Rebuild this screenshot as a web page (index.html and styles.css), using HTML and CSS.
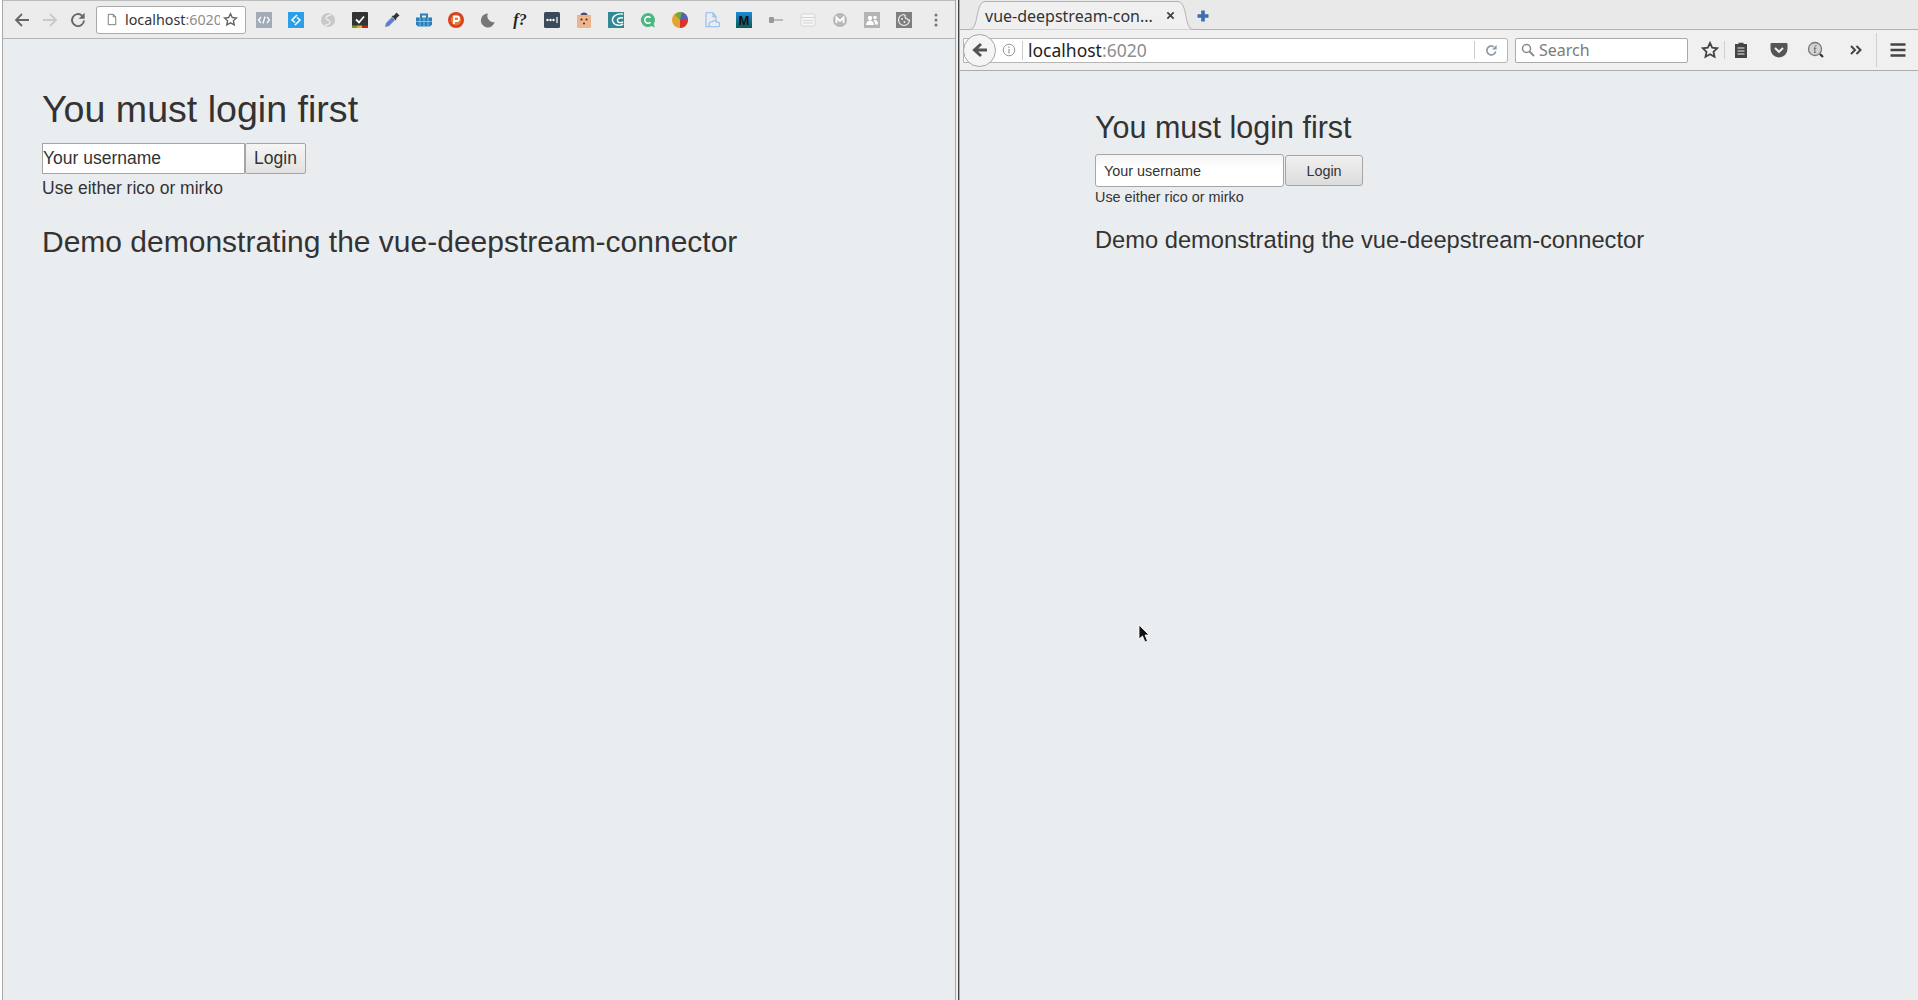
FILE: index.html
```html
<!DOCTYPE html>
<html lang="en">
<head>
<meta charset="utf-8">
<title>vue-deepstream-connector demo</title>
<link rel="stylesheet" href="styles.css">
</head>
<body>
<div class="desktop">
  <section class="chrome">
    <header class="c-bar">
      <div class="c-nav">
        <svg class="i18" viewBox="0 0 18 18"><path d="M16 9H3M9 3 3 9l6 6" fill="none" stroke="#666" stroke-width="1.8"/></svg>
        <svg class="i18" viewBox="0 0 18 18"><path d="M2 9h13M9 3l6 6-6 6" fill="none" stroke="#c9c9c9" stroke-width="1.8"/></svg>
        <svg class="i18" viewBox="0 0 18 18"><path d="M15 9.500A6 6 0 1 1 13 4.600" fill="none" stroke="#666" stroke-width="1.9"/><path d="M15.600 1.800v6h-6z" fill="#666"/></svg>
      </div>
      <div class="c-url">
        <svg class="c-page" viewBox="0 0 12 14"><path d="M1.500.8h6l3 3v9.400h-9zM7.500.8v3h3" fill="#fff" stroke="#666" stroke-width="1"/></svg>
        <span class="c-host">localhost<span class="dim">:6020</span></span>
        <svg class="c-star" viewBox="0 0 16 16"><path d="m8 1.800 1.900 4.100 4.500.5-3.300 3 .9 4.400L8 11.600l-4 2.200.9-4.400-3.300-3 4.500-.5z" fill="none" stroke="#666" stroke-width="1.500"/></svg>
      </div>
      <div class="c-exts">
        <svg class="ext" viewBox="0 0 16 16"><rect width="16" height="16" fill="#a3abb6"/><path d="M5 5 2.500 8 5 11M11 5l2.500 3L11 11M9 4.500 7 11.500" fill="none" stroke="#fff" stroke-width="1.200"/></svg>
        <svg class="ext" viewBox="0 0 16 16"><rect width="16" height="16" fill="#2b9fe8"/><path d="M9 3 4 8l3 2.500M7 13l5-5-3-2.500" fill="none" stroke="#fff" stroke-width="1.500"/></svg>
        <svg class="ext" viewBox="0 0 16 16"><circle cx="8" cy="8" r="7" fill="#c8c8c8"/><path d="M11.500 2.500C5 4 5 7 8 8s3 4.500-3.500 5.500" fill="none" stroke="#eee" stroke-width="1.300"/></svg>
        <svg class="ext" viewBox="0 0 16 16"><rect width="16" height="16" rx="1" fill="#333"/><path d="m4 7.500 3 3 5-6" fill="none" stroke="#fff" stroke-width="1.800"/><rect y="13.500" width="5" height="2.500" fill="#7a9a1c"/><rect x="5" y="13.500" width="5" height="2.500" fill="#d8b81e"/><rect x="10" y="13.500" width="6" height="2.500" fill="#b8261e"/></svg>
        <svg class="ext" viewBox="0 0 16 16"><path d="m1 15 1-4 6-6 3 3-6 6z" fill="#5c80cc"/><path d="m7.500 4 2.500-.5L12.500.5 15.500 3.500 12.500 6 12 8.500z" fill="#333"/></svg>
        <svg class="ext" viewBox="0 0 16 16"><path d="M0 5.500h16v7l-2 2H2l-2-2z" fill="#2a7fb8"/><path d="M5 6V2.500h6V6" fill="none" stroke="#2a7fb8" stroke-width="2"/><path d="M0 9.500h16M8 5.500v9M4 5.500v9M12 5.500v9" stroke="#bfe0f0" stroke-width=".6"/></svg>
        <svg class="ext" viewBox="0 0 16 16"><circle cx="8" cy="8" r="8" fill="#d8401f"/><circle cx="8" cy="8" r="5.300" fill="#f3a33a" opacity=".6"/><path d="M6 12V4.500h2.800a2.200 2.200 0 0 1 0 4.500H6" fill="none" stroke="#fff" stroke-width="1.800"/></svg>
        <svg class="ext" viewBox="0 0 16 16"><path d="M8 1.500A7 7 0 1 0 14.700 10 6 6 0 0 1 8 1.500z" fill="#777"/></svg>
        <span class="ext ext-f">f?</span>
        <svg class="ext" viewBox="0 0 16 16"><rect width="16" height="16" rx="1.500" fill="#3b4a5a"/><circle cx="3.500" cy="8" r="1.200" fill="#fff"/><circle cx="6.500" cy="8" r="1.200" fill="#fff"/><circle cx="9.500" cy="8" r="1.200" fill="#fff"/><path d="M13 5v6" stroke="#fff" stroke-width="1.200"/></svg>
        <svg class="ext" viewBox="0 0 16 16"><rect x="1" y="3" width="14" height="13" fill="#eeb48e"/><path d="M4.500 3a3.500 2.500 0 0 1 7 0z" fill="#5a4a6a"/><circle cx="5.500" cy="7.500" r="1" fill="#333"/><circle cx="10.500" cy="7.500" r="1" fill="#333"/><path d="M7 11.500h2" stroke="#333" stroke-width="1.500"/></svg>
        <svg class="ext" viewBox="0 0 16 16"><rect width="16" height="16" fill="#2f8a95"/><path d="M15 2C7 1 3 6 5 10s8 4 10 2M15 6c-4-1-6 1-5.500 3s3.500 2 5.500 1" fill="none" stroke="#fff" stroke-width="1.400"/></svg>
        <svg class="ext" viewBox="0 0 16 16"><path d="M8 1a7 7 0 1 0 3.500 13l3.500 1.500-1.300-3.500A7 7 0 0 0 8 1z" fill="#4cb780"/><path d="M10.500 5.800a3.300 3.300 0 1 0 0 4.400" fill="none" stroke="#fff" stroke-width="1.500"/></svg>
        <svg class="ext" viewBox="0 0 16 16"><circle cx="8" cy="8" r="8" fill="#e4a52c"/><path d="M8 0a8 8 0 0 1 8 8H8z" fill="#5a5fb0"/><path d="M8 8h8a8 8 0 0 1-8 8z" fill="#d8332e"/><path d="M3 3a7 7 0 0 1 7-3L8 8z" fill="#6aac44"/></svg>
        <svg class="ext" viewBox="0 0 16 16"><path d="M2 .8h7l3 4V9M6 14.800H2V.800M9 .8v4h3" fill="none" stroke="#8cbcf0" stroke-width="1.100"/><path d="M7 14.800a2.500 2.500 0 0 1 1-5 3 3 0 0 1 5 .5 2.300 2.300 0 0 1 1 4.500z" fill="none" stroke="#8cbcf0" stroke-width="1.100"/></svg>
        <svg class="ext" viewBox="0 0 16 16"><defs><linearGradient id="mg" x1="0" y1="0" x2="0" y2="1"><stop offset="0" stop-color="#1d8ad8"/><stop offset="1" stop-color="#0a5d50"/></linearGradient></defs><rect width="16" height="16" fill="url(#mg)"/><text x="8" y="13" class="ext-m">M</text></svg>
        <svg class="ext" viewBox="0 0 16 16"><rect x="1" y="5" width="5" height="6" rx="1" fill="#999"/><path d="M6 8h9" stroke="#aaa" stroke-width="1.500"/></svg>
        <svg class="ext" viewBox="0 0 16 16"><rect x="1" y="2" width="14" height="12" rx="1" fill="#f6f6f6" stroke="#d4d4d4"/><path d="M1 5.500h14M3 8.500h10M3 11h10" stroke="#d4d4d4"/></svg>
        <svg class="ext" viewBox="0 0 16 16"><circle cx="8" cy="8" r="7" fill="#b8b8b8"/><path d="M4.500 11V5.500L8 9l3.500-3.500V11" fill="none" stroke="#fff" stroke-width="1.800"/></svg>
        <svg class="ext" viewBox="0 0 16 16"><rect width="16" height="16" fill="#b4b4b4"/><circle cx="6" cy="6" r="2.200" fill="#fff"/><path d="M2 13c0-3 2-4.500 4-4.500s4 1.500 4 4.500z" fill="#fff"/><circle cx="11" cy="5.500" r="1.800" fill="#fff"/><path d="M11 8c2 0 3 1.500 3 4.500h-3c0-2-.5-3-1.500-4z" fill="#fff"/></svg>
        <svg class="ext" viewBox="0 0 16 16"><rect width="16" height="16" fill="#7f7f7f"/><path d="M8 2.500a5.500 5.500 0 1 0 5.500 5.500c-1.500.5-2.500-.5-2.500-1.500-1.500 0-2.500-1.500-1.800-3z" fill="none" stroke="#eee" stroke-width="1.200"/><circle cx="6" cy="7" r=".9" fill="#eee"/><circle cx="8.500" cy="10" r=".9" fill="#eee"/></svg>
        <svg class="ext" viewBox="0 0 16 16"><circle cx="8" cy="3" r="1.500" fill="#777"/><circle cx="8" cy="8" r="1.500" fill="#777"/><circle cx="8" cy="13" r="1.500" fill="#777"/></svg>
      </div>
    </header>
    <main class="c-page-body">
      <h1 class="c-title">You must login first</h1>
      <form class="c-form">
        <input class="c-input" type="text" placeholder="Your username">
        <button class="c-btn" type="button">Login</button>
      </form>
      <p class="c-hint">Use either rico or mirko</p>
      <h2 class="c-sub">Demo demonstrating the vue-deepstream-connector</h2>
    </main>
  </section>

  <div class="divider"></div>

  <section class="firefox">
    <header class="f-tabs">
      <div class="f-tab">
        <svg class="f-tab-shape" viewBox="0 0 223 30"><path d="M0 29.500C9 29 5 2.500 15 1.500H208C218 2.500 214 29 223 29.500" fill="#f0f0f0" stroke="#b2b2b2"/></svg>
        <span class="f-tab-title">vue-deepstream-con...</span>
        <svg class="f-close" viewBox="0 0 10 10"><path d="m1.500 1.500 7 7M8.500 1.500l-7 7" stroke="#444" stroke-width="2"/></svg>
      </div>
      <svg class="f-new" viewBox="0 0 14 14"><path d="M7 1.500v11M1.500 7h11" stroke="#3a6eb0" stroke-width="3.600"/></svg>
    </header>
    <div class="f-bar">
      <div class="f-url">
        <span class="f-back"><svg viewBox="0 0 18 18"><path d="M16 9H5M10 3 3.500 9l6.500 6" fill="none" stroke="#555" stroke-width="3"/></svg></span>
        <svg class="f-info" viewBox="0 0 14 14"><circle cx="7" cy="7" r="5.800" fill="none" stroke="#999"/><path d="M7 6v4.500M7 3.500v1.400" stroke="#999" stroke-width="1.200"/></svg>
        <span class="f-host">localhost<span class="dim">:6020</span></span>
        <span class="f-reload"><svg viewBox="0 0 14 14"><path d="M11.500 8A4.800 4.800 0 1 1 9.500 3" fill="none" stroke="#8a98a8" stroke-width="1.800"/><path d="M12.500 1v5h-5z" fill="#8a98a8"/></svg></span>
      </div>
      <div class="f-search">
        <svg viewBox="0 0 14 14"><circle cx="5.500" cy="5.500" r="4" fill="none" stroke="#888" stroke-width="1.500"/><path d="m8.500 8.500 4.500 4.500" stroke="#888" stroke-width="1.800"/></svg>
        <span>Search</span>
      </div>
      <div class="f-tools">
        <svg class="f-ic f-star" viewBox="0 0 18 18"><path d="m9 2 2.200 4.700 5 .6-3.700 3.500 1 5L9 13.300l-4.500 2.500 1-5-3.700-3.500 5-.6z" fill="none" stroke="#444" stroke-width="1.800"/></svg>
        <span class="f-sep"></span>
        <svg class="f-ic f-clip" viewBox="0 0 18 18"><path d="M6.500 3V1.800h5V3H15v14H3V3z" fill="#444"/><path d="M5.500 7h7M5.500 10h7M5.500 13h7" stroke="#eee" stroke-width="1.200"/></svg>
        <svg class="f-ic f-pocket" viewBox="0 0 18 18"><path d="M1.500 2h15a1 1 0 0 1 1 1v5a8.500 8.500 0 0 1-17 0V3a1 1 0 0 1 1-1z" fill="#555"/><path d="m5 7 4 3.800L13 7" fill="none" stroke="#f0f0f0" stroke-width="2"/></svg>
        <svg class="f-ic f-look" viewBox="0 0 18 18"><circle cx="8" cy="8" r="6.500" fill="#d4d4d4" stroke="#777" stroke-width="1.300"/><text x="8" y="12" class="f-look-f">f</text><path d="m13 13 3 3" stroke="#333" stroke-width="2.200"/></svg>
        <svg class="f-ic f-more" viewBox="0 0 14 14"><path d="m2 3 4 4-4 4M7.500 3l4 4-4 4" fill="none" stroke="#444" stroke-width="2"/></svg>
        <span class="f-sep f-sep-tall"></span>
        <svg class="f-ic f-menu" viewBox="0 0 18 18"><path d="M1.500 3.500h15M1.500 9h15M1.500 14.500h15" stroke="#444" stroke-width="2.600"/></svg>
      </div>
    </div>
    <main class="f-page-body">
      <h1 class="f-title">You must login first</h1>
      <form class="f-form">
        <input class="f-input" type="text" placeholder="Your username">
        <button class="f-btn" type="button">Login</button>
      </form>
      <p class="f-hint">Use either rico or mirko</p>
      <h2 class="f-sub">Demo demonstrating the vue-deepstream-connector</h2>
    </main>
    <svg class="cursor" viewBox="0 0 12 19"><path d="M1 1v14l3.500-3 2.500 6 2.500-1-2.500-6H11z" fill="#111" stroke="#fff" stroke-width=".8"/></svg>
  </section>
</div>
</body>
</html>
```
FILE: styles.css
```css
* { box-sizing: border-box; }
html, body { margin: 0; height: 100%; overflow: hidden; }
body { background: #eaedf0; color: #333; font-family: "Liberation Sans", Arial, sans-serif; }
.desktop { display: flex; width: 1918px; height: 1000px; }
.dim { color: #8d8d8d; }

/* Left window */
.chrome { width: 955px; flex: none; border-left: 2px solid #fff; display: flex; flex-direction: column; box-shadow: inset 1px 0 0 #a8a8a8; }
.c-bar { height: 39px; margin-left: 1px; background: #ececec; border-top: 1px solid #bcbcbc; border-bottom: 1px solid #b5b5b5; display: flex; align-items: center; flex: none; }
.c-nav { width: 93px; padding-left: 10px; display: flex; gap: 10px; align-items: center; flex: none; }
.i18 { width: 18px; height: 18px; display: block; }
.c-url { width: 150px; height: 28px; background: #fff; border: 1px solid #a9a9a9; border-radius: 3px; display: flex; align-items: center; padding-left: 10px; flex: none; }
.c-page { width: 10px; height: 13px; flex: none; }
.c-host { margin-left: 8px; font: 14.300px "Noto Sans", sans-serif; color: #333; width: 95px; overflow: hidden; white-space: nowrap; flex: none; }
.c-star { width: 15px; height: 15px; flex: none; margin-left: 3px; }
.c-exts { display: flex; gap: 16px; margin-left: 10px; align-items: center; }
.ext { width: 16px; height: 16px; display: block; flex: none; }
.ext-f { font: italic bold 16px/16px "Liberation Serif", serif; color: #222; white-space: nowrap; text-align: center; }
.ext-m { font: bold 13px "Liberation Sans", sans-serif; fill: #111; text-anchor: middle; }
.c-page-body { padding: 0 0 0 40px; flex: 1; }
.c-title { margin: 50px 0 0; font-size: 37.600px; line-height: 40px; font-weight: 400; }
.c-form { display: flex; margin-top: 14px; }
.c-input { width: 203px; height: 31px; padding: 0; border: 1px solid #a5a5a5; background: #fff; font: 17.500px "Liberation Sans", sans-serif; border-radius: 0; outline: 0; }
.c-input::placeholder { color: #333; opacity: 1; }
.c-btn { width: 61px; height: 31px; padding: 0; border: 1px solid #a5a5a5; border-radius: 2px; background: linear-gradient(#f5f5f5, #e2e2e2); color: #333; font: 17.500px "Liberation Sans", sans-serif; }
.c-hint { margin: 2px 0 0; font-size: 17.500px; line-height: 25px; }
.c-sub { margin: 24px 0 0; font-size: 30px; line-height: 33px; font-weight: 400; }

/* Divider */
.divider { width: 5px; flex: none; background: linear-gradient(90deg, #a8a8a8 0, #a8a8a8 1px, #f0f0f0 1px, #f0f0f0 3px, #444 3px, #444 4px, #aaa 4px); }

/* Right window */
.firefox { flex: 1; position: relative; display: flex; flex-direction: column; }
.f-tabs { height: 30px; background: #e9e9e9; border-bottom: 1px solid #b2b2b2; display: flex; align-items: flex-start; padding-left: 10px; flex: none; }
.f-tab { position: relative; width: 223px; height: 30px; flex: none; display: flex; align-items: center; padding: 1px 0 0 15px; }
.f-tab-shape { position: absolute; left: 0; top: 0; width: 223px; height: 30px; }
.f-tab-title { position: relative; font: 16px "Noto Sans", sans-serif; color: #333; width: 173px; white-space: nowrap; flex: none; }
.f-close { position: relative; width: 9px; height: 9px; margin-left: 8px; flex: none; }
.f-new { width: 14px; height: 14px; margin: 9px 0 0 3px; flex: none; }
.f-bar { height: 41px; background: #f0f0f0; border-bottom: 1px solid #adadad; display: flex; align-items: center; padding: 0 0 0 3px; flex: none; }
.f-url { position: relative; width: 545px; height: 25px; padding-left: 38px; background: #fff; border: 1px solid #b5b5b5; border-radius: 0 3px 3px 0; display: flex; align-items: center; flex: none; }
.f-back { position: absolute; left: -1px; top: -5px; width: 33px; height: 33px; border-radius: 50%; background: #f5f5f5; border: 1px solid #a5a5a5; display: flex; align-items: center; justify-content: center; }
.f-back svg { width: 18px; height: 18px; }
.f-info { width: 14px; height: 14px; flex: none; }
.f-host { margin-left: 6px; padding-left: 5px; border-left: 1px solid #ccc; font: 17.500px/19px "Noto Sans", sans-serif; color: #222; flex: 1; }
.f-reload { width: 33px; height: 18px; border-left: 1px solid #ccc; display: flex; align-items: center; justify-content: center; flex: none; }
.f-reload svg { width: 13px; height: 13px; }
.f-search { width: 173px; height: 25px; margin-left: 7px; padding-left: 5px; background: #fff; border: 1px solid #aaa; border-radius: 2px; display: flex; align-items: center; gap: 4px; font: 16px "Noto Sans", sans-serif; color: #7b7b7b; flex: none; }
.f-search svg { width: 14px; height: 14px; flex: none; }
.f-tools { display: flex; align-items: center; flex: 1; padding-left: 13px; }
.f-ic { display: block; flex: none; width: 18px; height: 18px; }
.f-sep { width: 1px; height: 18px; background: #d0d0d0; margin: 0 7px 0 5px; flex: none; }
.f-sep-tall { height: 34px; margin: 0 12px 0 13px; }
.f-pocket { margin-left: 20px; }
.f-look { margin-left: 19px; }
.f-more { margin-left: 24px; width: 14px; height: 14px; }
.f-look-f { font: 10px "Liberation Serif", serif; fill: #555; text-anchor: middle; }
.f-page-body { padding-left: 135px; flex: 1; }
.f-title { margin: 40px 0 0; font-size: 30.500px; line-height: 33px; font-weight: 400; }
.f-form { display: flex; margin-top: 10px; }
.f-input { width: 189px; height: 33px; padding: 0 8px; border: 1px solid #a5a5a5; border-radius: 3px; background: linear-gradient(#f4f4f4, #fff 40%); font: 14.400px "Liberation Sans", sans-serif; outline: 0; }
.f-input::placeholder { color: #333; opacity: 1; }
.f-btn { width: 78px; height: 31px; margin: 1px 0 0 1px; padding: 0; border: 1px solid #a5a5a5; border-radius: 3px; background: linear-gradient(#f0f0f0, #dcdcdc); color: #333; font: 14.400px "Liberation Sans", sans-serif; }
.f-hint { margin: 0; font-size: 14.400px; line-height: 20px; }
.f-sub { margin: 20px 0 0; font-size: 23.700px; line-height: 27px; font-weight: 400; }
.cursor { position: absolute; left: 178px; top: 624px; width: 12px; height: 19px; }
```
